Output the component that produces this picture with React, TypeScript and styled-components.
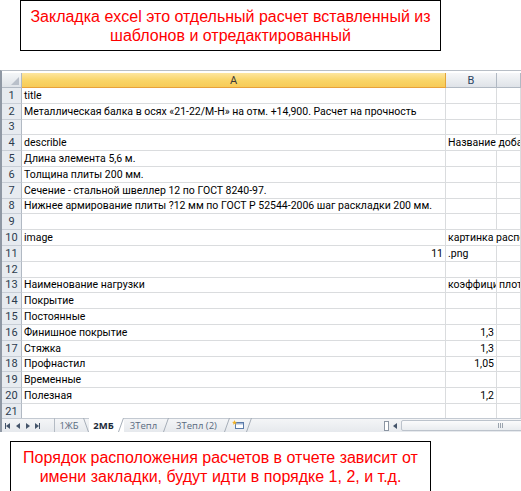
import React from "react";
import styled, { createGlobalStyle, css } from "styled-components";

const GlobalStyle = createGlobalStyle`
  html, body { margin: 0; padding: 0; background: #ffffff; }
  body { font-family: "Liberation Sans", Arial, sans-serif; }
`;

const Page = styled.div`
  width: 521px;
  height: 491px;
  overflow: hidden;
  display: flex;
  flex-direction: column;
  background: #fff;
`;

const Note = styled.div<{ $left: number; $top: number }>`
  box-sizing: border-box;
  width: 421px;
  height: 51px;
  margin-left: ${(p) => p.$left}px;
  margin-top: ${(p) => p.$top}px;
  border: 1px solid #000;
  color: #ff0000;
  font-family: "Liberation Sans", Arial, sans-serif;
  font-size: 16px;
  line-height: 19px;
  text-align: center;
  padding-top: 6px;
  flex: none;
`;

const Sheet = styled.div`
  margin-top: 19px;
  border-top: 1px solid #b8bec6;
  border-left: 2px solid #8f98a4;
  padding-top: 2px;
  display: flex;
  flex-direction: column;
  flex: none;
`;

const GridViewport = styled.div`
  height: 345px;
  overflow: hidden;
  font-family: Roboto, "Noto Sans", sans-serif;
  font-size: 10.5px;
  color: #000;
`;

const COLS = "20px 424px 51px 1fr";

const HeaderRow = styled.div`
  display: grid;
  grid-template-columns: ${COLS};
  height: 15px;
`;

const Corner = styled.div`
  box-sizing: border-box;
  background: linear-gradient(#f4f6f8, #dfe3e8);
  border-right: 1px solid #b1b9c3;
  border-bottom: 1px solid #b1b9c3;
  display: flex;
  align-items: flex-end;
  justify-content: flex-end;
  padding: 0 2px 2px 0;
`;

const ColHead = styled.div<{ $selected?: boolean }>`
  box-sizing: border-box;
  display: flex;
  align-items: center;
  justify-content: center;
  font-size: 11px;
  border-right: 1px solid ${(p) => (p.$selected ? "#e3a53a" : "#b1b9c3")};
  border-bottom: 1px solid ${(p) => (p.$selected ? "#e8a13a" : "#b1b9c3")};
  color: ${(p) => (p.$selected ? "#3a3a3a" : "#2a4260")};
  background: ${(p) =>
    p.$selected
      ? "linear-gradient(#fde6a0, #f9d466 55%, #f7cb57)"
      : "linear-gradient(#f6f7f9, #dfe3e8)"};
`;

const Row = styled.div`
  display: grid;
  grid-template-columns: ${COLS};
  height: 15.8px;
`;

const RowNum = styled.div`
  box-sizing: border-box;
  background: #e7ebf0;
  border-right: 1px solid #b1b9c3;
  border-bottom: 1px solid #c8ced6;
  color: #2c3b4e;
  font-size: 11px;
  display: flex;
  align-items: center;
  justify-content: center;
  line-height: 1;
`;

const Cell = styled.div<{ $right?: boolean; $span?: boolean }>`
  box-sizing: border-box;
  border-right: 1px solid #dadcde;
  border-bottom: 1px solid #dadcde;
  padding: 0 2px 1px;
  white-space: nowrap;
  overflow: hidden;
  display: flex;
  align-items: flex-end;
  line-height: 13px;
  justify-content: ${(p) => (p.$right ? "flex-end" : "flex-start")};
  ${(p) =>
    p.$span &&
    css`
      grid-column: span 2;
    `}
`;

type RowData = {
  n: number;
  a?: string;
  aRight?: boolean;
  b?: string;
  bRight?: boolean;
  bSpan?: boolean;
  c?: string;
};

const rows: RowData[] = [
  { n: 1, a: "title" },
  { n: 2, a: "Металлическая балка в осях «21-22/М-Н» на отм. +14,900. Расчет на прочность" },
  { n: 3 },
  { n: 4, a: "describle", b: "Название добавочного", bSpan: true },
  { n: 5, a: "Длина элемента 5,6 м." },
  { n: 6, a: "Толщина плиты 200 мм." },
  { n: 7, a: "Сечение - стальной швеллер 12 по ГОСТ 8240-97." },
  { n: 8, a: "Нижнее армирование плиты ?12 мм по ГОСТ Р 52544-2006 шаг раскладки 200 мм." },
  { n: 9 },
  { n: 10, a: "image", b: "картинка расположения", bSpan: true },
  { n: 11, a: "11", aRight: true, b: ".png" },
  { n: 12 },
  { n: 13, a: "Наименование нагрузки", b: "коэффициент", c: "плотность" },
  { n: 14, a: "Покрытие" },
  { n: 15, a: "Постоянные" },
  { n: 16, a: "Финишное покрытие", b: "1,3", bRight: true },
  { n: 17, a: "Стяжка", b: "1,3", bRight: true },
  { n: 18, a: "Профнастил", b: "1,05", bRight: true },
  { n: 19, a: "Временные" },
  { n: 20, a: "Полезная", b: "1,2", bRight: true },
  { n: 21 },
];

const TabBar = styled.div`
  height: 14px;
  display: flex;
  align-items: stretch;
  background: linear-gradient(#f4f5f7, #e6e9ed);
  border-top: 1px solid #c3c9d1;
  font-family: "Open Sans", "Noto Sans", sans-serif;
  font-size: 9.5px;
  color: #4a5a70;
  box-sizing: border-box;
`;

const Nav = styled.div`
  width: 50px;
  display: flex;
  align-items: center;
  gap: 3px;
  padding-left: 2px;
  flex: none;
`;

const NavBtn = styled.span`
  width: 7px;
  display: flex;
  justify-content: center;
`;

const Tab = styled.div<{ $active?: boolean; $w: number; $first?: boolean }>`
  width: ${(p) => p.$w}px;
  flex: none;
  display: flex;
  align-items: stretch;
  box-sizing: border-box;
  border-left: ${(p) => (p.$first ? "1px solid #b4bbc4" : "none")};
  margin-top: -1px;
  background: ${(p) => (p.$active ? "#ffffff" : "transparent")};
  font-weight: ${(p) => (p.$active ? 700 : 400)};
  color: ${(p) => (p.$active ? "#1d2a3a" : "#5a6a80")};
`;

const TabLabel = styled.span`
  flex: 1;
  display: flex;
  align-items: center;
  justify-content: center;
  white-space: nowrap;
`;

const Slash = styled.svg`
  flex: none;
  display: block;
`;

const Spacer = styled.div`
  flex: 1;
`;

const ScrollArea = styled.div`
  width: 137px;
  flex: none;
  display: flex;
  align-items: center;
  gap: 4px;
`;

const SplitBox = styled.div`
  width: 3px;
  height: 8px;
  border: 1px solid #8c96a3;
  background: #fff;
  flex: none;
`;

const Track = styled.div`
  flex: 1;
  height: 11px;
  margin-right: -3px;
  box-sizing: border-box;
  border: 1px solid #bcc3cc;
  border-radius: 2px;
  background: linear-gradient(#fbfbfc, #e9ecef);
  display: flex;
  align-items: center;
  justify-content: flex-end;
  padding-right: 20px;
`;

const Grip = styled.div`
  display: flex;
  gap: 1px;
  span {
    width: 1px;
    height: 5px;
    background: #9aa3ae;
  }
`;

const Tri = ({ dir }: { dir: "l" | "r" }) => (
  <svg width="4" height="6" viewBox="0 0 4 6">
    {dir === "l" ? <path d="M4 0 L0 3 L4 6 Z" fill="#44546a" /> : <path d="M0 0 L4 3 L0 6 Z" fill="#44546a" />}
  </svg>
);

const Bar = () => (
  <svg width="1" height="6" viewBox="0 0 1 6">
    <rect width="1" height="6" fill="#44546a" />
  </svg>
);

const SlashMark = ({ back }: { back?: boolean }) => (
  <Slash width="6" height="14" viewBox="0 0 6 14">
    <path d={back ? "M0.5 0 L5.5 14" : "M0.5 14 L5.5 0"} stroke="#a6aeb8" strokeWidth="1" fill="none" />
  </Slash>
);

const InsertIcon = () => (
  <svg width="12" height="10" viewBox="0 0 12 10">
    <rect x="3.5" y="2.5" width="8" height="6" fill="#ffffff" stroke="#5b7aa8" />
    <rect x="4" y="3" width="7" height="1.5" fill="#9db4d6" />
    <path d="M2.5 0 L3.2 1.8 L5 2 L3.6 3 L4 4.8 L2.5 3.8 L1 4.8 L1.4 3 L0 2 L1.8 1.8 Z" fill="#f2b227" />
  </svg>
);

const tabs = [
  { label: "1ЖБ", w: 35, first: true, back: true },
  { label: "2МБ", w: 35, active: true },
  { label: "3Тепл", w: 45 },
  { label: "3Тепл (2)", w: 61 },
];

export default function App() {
  return (
    <Page>
      <GlobalStyle />
      <Note $left={20} $top={0}>
        Закладка excel это отдельный расчет вставленный из
        <br />
        шаблонов и отредактированный
      </Note>
      <Sheet>
        <GridViewport>
          <HeaderRow>
            <Corner>
              <svg width="8" height="8" viewBox="0 0 8 8">
                <path d="M8 0 L8 8 L0 8 Z" fill="#b9c0ca" />
              </svg>
            </Corner>
            <ColHead $selected>A</ColHead>
            <ColHead>B</ColHead>
            <ColHead />
          </HeaderRow>
          {rows.map((r) => (
            <Row key={r.n}>
              <RowNum>{r.n}</RowNum>
              <Cell $right={r.aRight}>{r.a}</Cell>
              {r.bSpan ? (
                <Cell $span>{r.b}</Cell>
              ) : (
                <>
                  <Cell $right={r.bRight}>{r.b}</Cell>
                  <Cell>{r.c}</Cell>
                </>
              )}
            </Row>
          ))}
        </GridViewport>
        <TabBar>
          <Nav>
            <NavBtn>
              <Bar />
              <Tri dir="l" />
            </NavBtn>
            <NavBtn>
              <Tri dir="l" />
            </NavBtn>
            <NavBtn>
              <Tri dir="r" />
            </NavBtn>
            <NavBtn>
              <Tri dir="r" />
              <Bar />
            </NavBtn>
          </Nav>
          {tabs.map((t) => (
            <Tab key={t.label} $w={t.w} $first={t.first} $active={t.active}>
              <TabLabel>{t.label}</TabLabel>
              <SlashMark back={t.back} />
            </Tab>
          ))}
          <Tab $w={22}>
            <TabLabel>
              <InsertIcon />
            </TabLabel>
            <SlashMark />
          </Tab>
          <Spacer />
          <ScrollArea>
            <SplitBox />
            <Tri dir="l" />
            <Track>
              <Grip>
                <span />
                <span />
                <span />
              </Grip>
            </Track>
          </ScrollArea>
        </TabBar>
      </Sheet>
      <Note $left={10} $top={9}>
        Порядок расположения расчетов в отчете зависит от
        <br />
        имени закладки, будут идти в порядке 1, 2, и т.д.
      </Note>
    </Page>
  );
}
